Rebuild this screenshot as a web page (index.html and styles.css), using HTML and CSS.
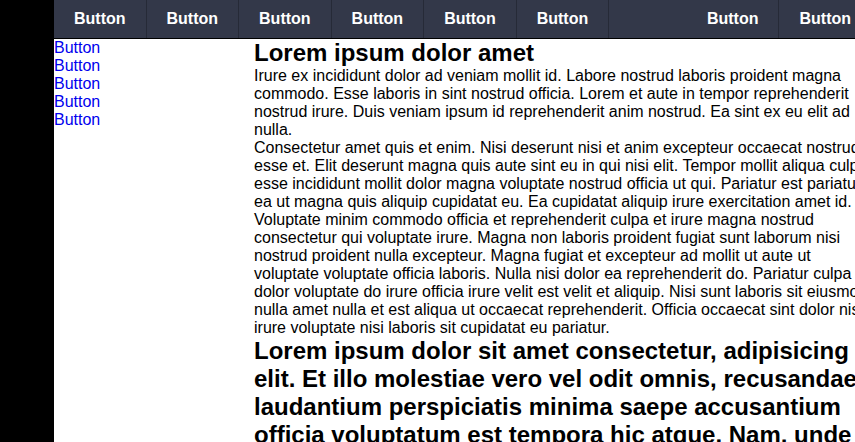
FILE: index.html
```html
<!DOCTYPE html>
<html lang="en">
<head>
<meta charset="utf-8">
<title>Layout</title>
<link rel="stylesheet" href="styles.css">
</head>
<body>
<div class="page">
  <div class="rail"></div>
  <div class="app">
    <nav class="topnav">
      <a class="navbtn" href="#">Button</a>
      <a class="navbtn" href="#">Button</a>
      <a class="navbtn" href="#">Button</a>
      <a class="navbtn" href="#">Button</a>
      <a class="navbtn" href="#">Button</a>
      <a class="navbtn" href="#">Button</a>
      <span class="spacer"></span>
      <a class="navbtn" href="#">Button</a>
      <a class="navbtn" href="#">Button</a>
    </nav>
    <div class="body-row">
      <aside class="sidebar">
        <a class="sidelink" href="#">Button</a>
        <a class="sidelink" href="#">Button</a>
        <a class="sidelink" href="#">Button</a>
        <a class="sidelink" href="#">Button</a>
        <a class="sidelink" href="#">Button</a>
      </aside>
      <main class="main">
        <h1 class="title">Lorem ipsum dolor amet</h1>
        <p class="text">Irure ex incididunt dolor ad veniam mollit id. Labore nostrud laboris proident magna commodo. Esse laboris in sint nostrud officia. Lorem et aute in tempor reprehenderit nostrud irure. Duis veniam ipsum id reprehenderit anim nostrud. Ea sint ex eu elit ad nulla.</p>
        <p class="text">Consectetur amet quis et enim. Nisi deserunt nisi et anim excepteur occaecat nostrud esse et. Elit deserunt magna quis aute sint eu in qui nisi elit. Tempor mollit aliqua culpa esse incididunt mollit dolor magna voluptate nostrud officia ut qui. Pariatur est pariatur ea ut magna quis aliquip cupidatat eu. Ea cupidatat aliquip irure exercitation amet id.</p>
        <p class="text">Voluptate minim commodo officia et reprehenderit culpa et irure magna nostrud consectetur qui voluptate irure. Magna non laboris proident fugiat sunt laborum nisi nostrud proident nulla excepteur. Magna fugiat et excepteur ad mollit ut aute ut voluptate voluptate officia laboris. Nulla nisi dolor ea reprehenderit do. Pariatur culpa dolor voluptate do irure officia irure velit est velit et aliquip. Nisi sunt laboris sit eiusmod nulla amet nulla et est aliqua ut occaecat reprehenderit. Officia occaecat sint dolor nisi irure voluptate nisi laboris sit cupidatat eu pariatur.</p>
        <h2 class="title">Lorem ipsum dolor sit amet consectetur, adipisicing elit. Et illo molestiae vero vel odit omnis, recusandae laudantium perspiciatis minima saepe accusantium officia voluptatum est tempora hic atque. Nam, unde quibusdam.</h2>
      </main>
    </div>
  </div>
</div>
</body>
</html>
```

FILE: styles.css
```css
html, body {
  margin: 0;
  padding: 0;
  overflow: hidden;
  background: #fff;
}

body {
  font-family: "Liberation Sans", Arial, sans-serif;
  font-size: 16px;
  color: #000;
}

.page {
  display: flex;
  align-items: stretch;
  min-height: 442px;
}

.rail {
  flex: none;
  width: 54px;
  background: #000;
}

.app {
  flex: none;
  width: 818px;
  display: flex;
  flex-direction: column;
}

.topnav {
  display: flex;
  height: 38px;
  background: #333849;
  border-bottom: 1px solid #000;
}

.navbtn {
  display: flex;
  align-items: center;
  padding: 0 20px;
  border-right: 1px solid #262a37;
  color: #fff;
  font-weight: bold;
  text-decoration: none;
}

.spacer {
  flex: 1;
}

.body-row {
  display: flex;
}

.sidebar {
  flex: none;
  width: 200px;
  display: flex;
  flex-direction: column;
  align-items: flex-start;
}

.sidelink {
  color: #0000ee;
  text-decoration: none;
}

.main {
  flex: 1;
  min-width: 0;
}

.title {
  margin: 0;
  font-size: 24px;
  font-weight: bold;
}

.text {
  margin: 0;
}
```
